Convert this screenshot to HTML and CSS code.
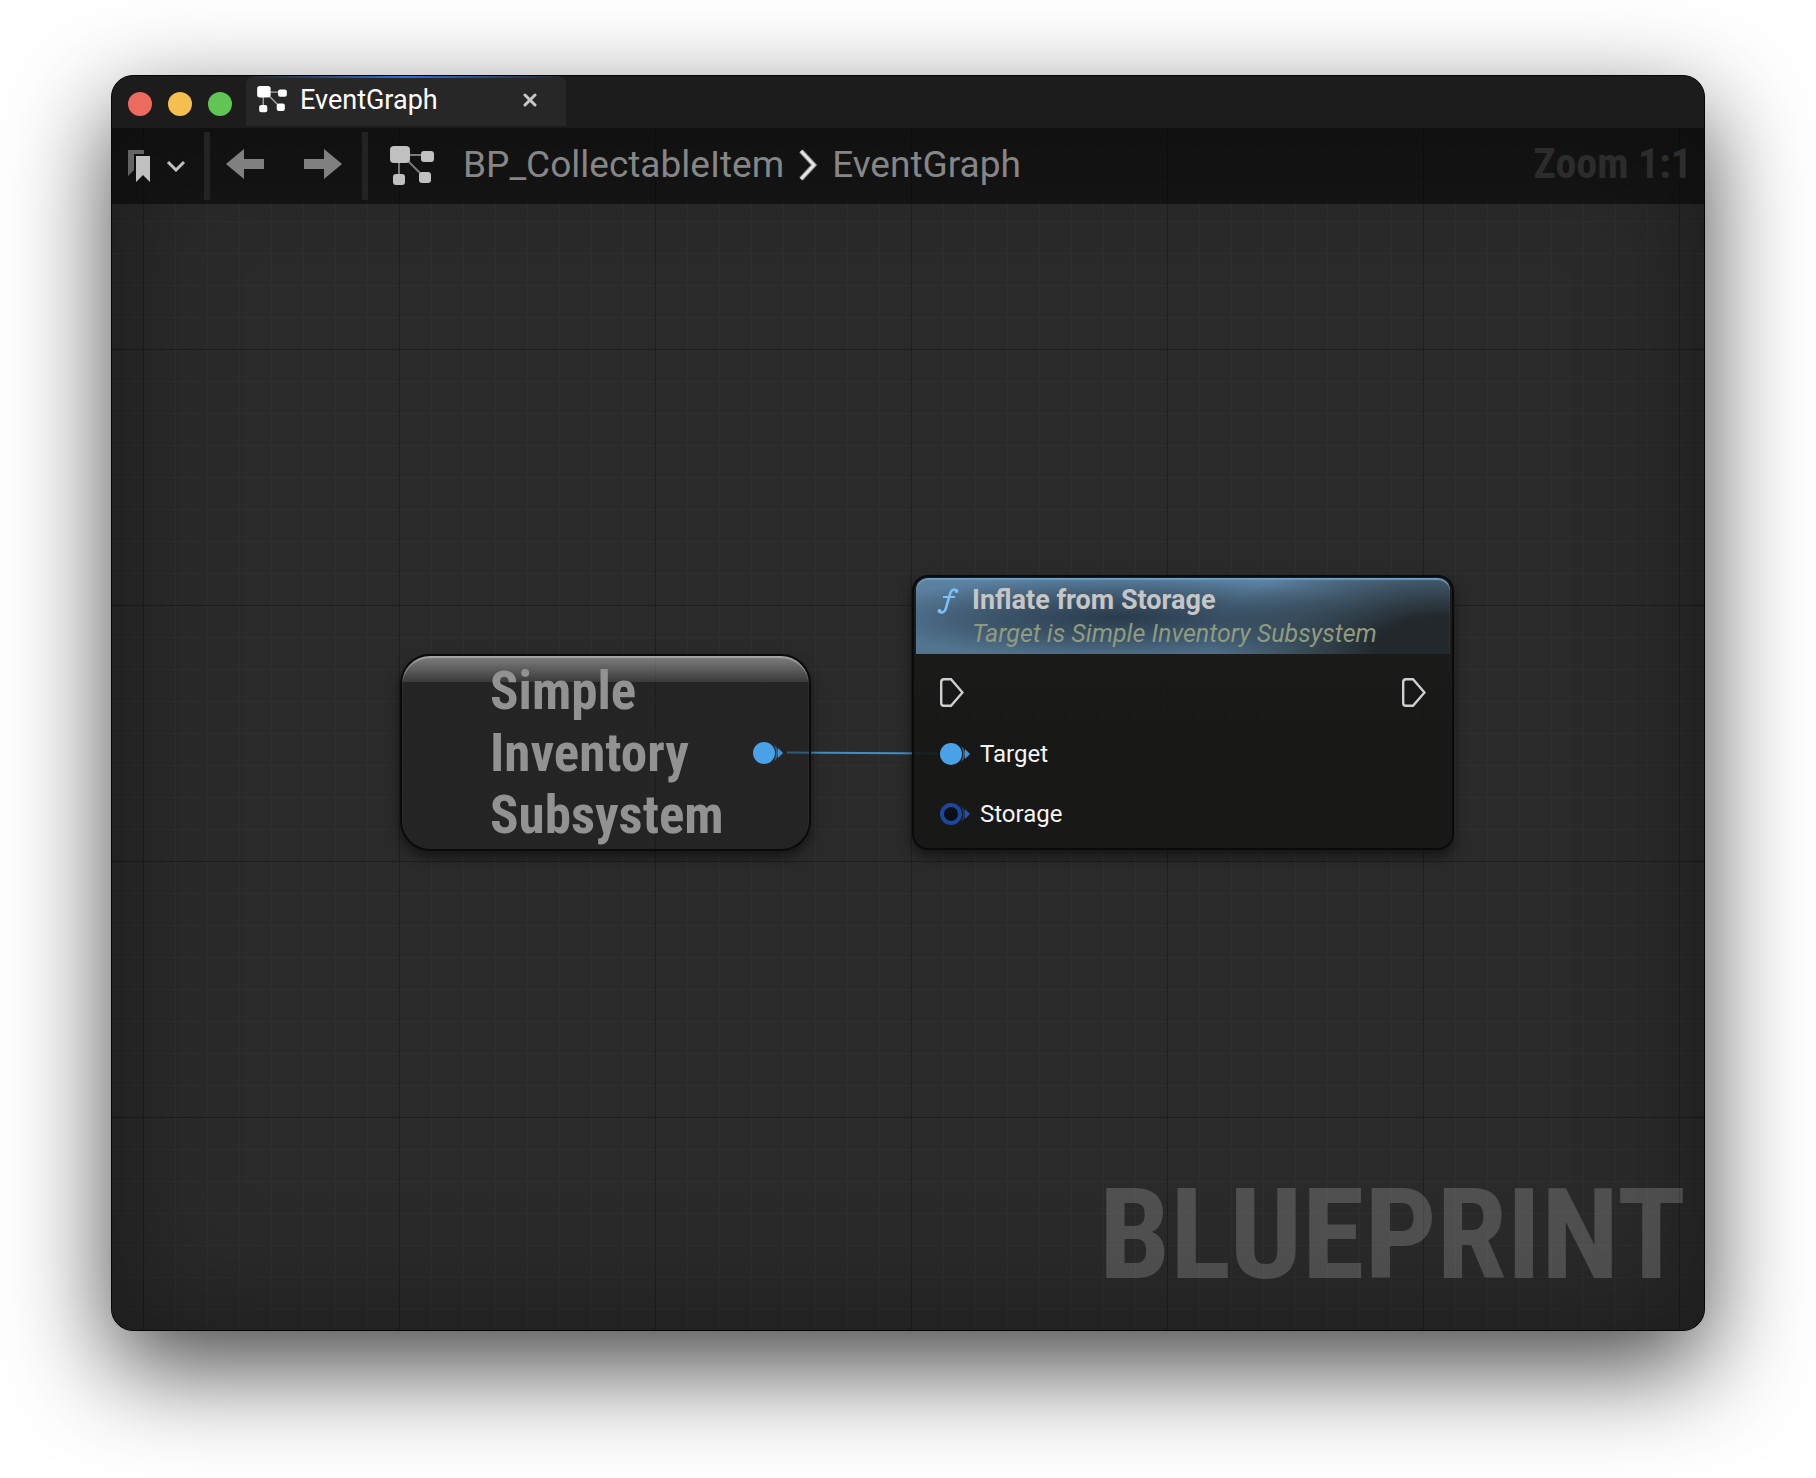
FILE: index.html
```html
<!DOCTYPE html>
<html lang="en">
<head>
<meta charset="utf-8">
<title>EventGraph</title>
<link rel="stylesheet" href="styles.css">
</head>
<body>
<svg class="defs" aria-hidden="true">
  <symbol id="graph" viewBox="0 0 44 40">
    <path d="M17 9H34M9 14V32M17 14L34 31" fill="none" stroke="currentColor" stroke-width="2" opacity=".6"/>
    <rect x="0" y="0" width="20" height="17" rx="4"/>
    <rect x="31" y="5" width="13" height="11" rx="3"/>
    <rect x="3" y="28" width="12" height="11" rx="3"/>
    <rect x="29" y="26" width="12" height="11" rx="3"/>
  </symbol>
  <symbol id="exec" viewBox="0 0 24 29">
    <path d="M1.200 4Q1.200 1.200 4 1.200H11L22.500 14.500L11 27.800H4Q1.200 27.800 1.200 25Z" fill="#161716" stroke="#cfcfcf" stroke-width="2.400"/>
  </symbol>
  <symbol id="pin-tip" viewBox="0 0 30 22">
    <path d="M21 3Q25 11 21 19L24 16Q26 11 24 6Z" opacity=".6"/>
    <path d="M25 6L30 11L25 16Z"/>
  </symbol>
</svg>

<main class="window">
  <header class="titlebar">
    <div class="lights">
      <button class="light light-close" aria-label="Close window"></button>
      <button class="light light-min" aria-label="Minimize window"></button>
      <button class="light light-max" aria-label="Zoom window"></button>
    </div>
    <div class="tab">
      <svg class="tab-icon"><use href="#graph"/></svg>
      <span class="tab-name">EventGraph</span>
      <button class="tab-close" aria-label="Close tab">
        <svg width="14" height="14" viewBox="0 0 14 14"><path d="M2 2L12 12M12 2L2 12" stroke="#c8c8c8" stroke-width="3" stroke-linecap="round"/></svg>
      </button>
    </div>
  </header>

  <section class="graph">
    <nav class="toolbar">
      <button class="bookmarks" aria-label="Bookmarks">
        <svg width="22" height="32" viewBox="0 0 22 32"><path d="M0 0H16V4H6V20L0 26Z" fill="#646464"/><path d="M8 6H22V32L15 25L8 32Z" fill="#c0c0c0"/></svg>
        <svg width="20" height="12" viewBox="0 0 20 12"><path d="M2 2L10 10L18 2" fill="none" stroke="#c0c0c0" stroke-width="3"/></svg>
      </button>
      <span class="divider"></span>
      <div class="history">
        <button aria-label="Back"><svg width="38" height="30" viewBox="0 0 38 30"><path d="M0 15L18 0V10H38V20H18V30Z" fill="#808080"/></svg></button>
        <button aria-label="Forward"><svg width="38" height="30" viewBox="0 0 38 30"><path d="M38 15L20 0V10H0V20H20V30Z" fill="#808080"/></svg></button>
      </div>
      <span class="divider"></span>
      <svg class="crumb-icon"><use href="#graph"/></svg>
      <div class="crumbs">
        <a href="#blueprint">BP_CollectableItem</a>
        <svg width="20" height="32" viewBox="0 0 20 32"><path d="M3 2L16 16L3 30" fill="none" stroke="#777" stroke-width="5"/><path d="M3 2L16 16L3 30" fill="none" stroke="#e4e4e4" stroke-width="3"/></svg>
        <a href="#eventgraph">EventGraph</a>
      </div>
      <span class="zoom">Zoom 1:1</span>
    </nav>

    <svg class="wire" width="150" height="4" viewBox="0 0 150 4"><path d="M0 1.500L150 2.500" stroke="#3d8fcb" stroke-width="2"/></svg>

    <article class="node subsystem">
      <h2 class="subsystem-name">Simple<br>Inventory<br>Subsystem</h2>
      <svg class="pin" viewBox="0 0 30 22"><circle cx="11" cy="11" r="11" fill="#49a1e8"/><use href="#pin-tip" fill="#3f93d6"/></svg>
    </article>

    <article class="node function">
      <header class="function-head">
        <svg width="22" height="26" viewBox="0 0 22 26"><path d="M20 3C17 0 14 2 13 6L9 20C8 24 5 26 2 23" fill="none" stroke="#7cc0f8" stroke-width="2.600"/><path d="M6 9H18" stroke="#7cc0f8" stroke-width="2"/><circle cx="19.500" cy="3" r="2" fill="#7cc0f8"/><circle cx="2.500" cy="23" r="2" fill="#7cc0f8"/></svg>
        <div>
          <h2 class="function-name">Inflate from Storage</h2>
          <p class="function-target">Target is Simple Inventory Subsystem</p>
        </div>
      </header>
      <div class="pins">
        <div class="pin-row pin-row-exec">
          <svg class="exec"><use href="#exec"/></svg>
          <svg class="exec"><use href="#exec"/></svg>
        </div>
        <div class="pin-row">
          <svg class="pin" viewBox="0 0 30 22"><circle cx="11" cy="11" r="11" fill="#49a1e8"/><use href="#pin-tip" fill="#3f93d6"/></svg>
          <span>Target</span>
        </div>
        <div class="pin-row">
          <svg class="pin" viewBox="0 0 30 22"><circle cx="11" cy="11" r="9" fill="#0b0e14" stroke="#1d479c" stroke-width="4"/><use href="#pin-tip" fill="#2450b0"/></svg>
          <span>Storage</span>
        </div>
      </div>
    </article>

    <div class="watermark">BLUEPRINT</div>
  </section>
</main>
</body>
</html>
```
FILE: styles.css
```css
* {
  box-sizing: border-box;
}

body {
  margin: 0;
  min-height: 100vh;
  padding: 75px 111px 147px;
  display: flex;
  background: #fff;
  font-family: Roboto, "Liberation Sans", sans-serif;
}

button {
  border: 0;
  padding: 0;
  background: none;
  display: flex;
  align-items: center;
  cursor: pointer;
}

svg {
  display: block;
  flex: none;
}

h2,
p {
  margin: 0;
}

.defs {
  position: absolute;
  width: 0;
  height: 0;
}

.window {
  flex: 1;
  display: flex;
  flex-direction: column;
  border: 1px solid #050505;
  border-radius: 22px;
  overflow: hidden;
  background: #1c1c1c;
  box-shadow: 0 36px 100px rgba(0, 0, 0, .72);
}

.titlebar {
  display: flex;
  align-items: flex-start;
  gap: 14px;
  height: 52px;
  padding-left: 16px;
}

.lights {
  display: flex;
  gap: 16px;
  padding-top: 16px;
}

.light {
  width: 24px;
  height: 24px;
  border-radius: 50%;
}

.light-close { background: #ec6a5e; }
.light-min { background: #f4bf4f; }
.light-max { background: #61c554; }

.tab {
  display: flex;
  align-items: center;
  width: 320px;
  height: 50px;
  padding: 0 29px 3px 11px;
  border-radius: 8px 8px 0 0;
  background:
    linear-gradient(90deg, #252525, #2e6fd8 50%, #252525) 0 0 / 100% 2px no-repeat,
    #272727;
  color: #fff;
}

.tab-icon {
  width: 30px;
  height: 27px;
  fill: currentColor;
}

.tab-name {
  margin-left: 13px;
  font-size: 27px;
  line-height: 32px;
}

.tab-close {
  margin-left: auto;
}

.graph {
  flex: 1;
  position: relative;
  display: flex;
  flex-direction: column;
  justify-content: space-between;
  box-shadow: inset 0 0 120px rgba(0, 0, 0, .4);
  background:
    linear-gradient(90deg, #1e1e1e 1px, transparent 1px) 31px 0 / 256px 256px,
    linear-gradient(#1e1e1e 1px, transparent 1px) 0 221px / 256px 256px,
    linear-gradient(90deg, #2e2e2e 1px, transparent 1px) 31px 0 / 32px 32px,
    linear-gradient(#2e2e2e 1px, transparent 1px) 0 29px / 32px 32px,
    #2a2a2a;
}

.toolbar {
  display: flex;
  align-items: center;
  height: 76px;
  padding-right: 12px;
  background: rgba(8, 8, 8, .64);
}

.bookmarks {
  gap: 16px;
  width: 92px;
  padding-left: 16px;
}

.divider {
  width: 6px;
  height: 68px;
  background: #232323;
}

.history {
  display: flex;
  gap: 40px;
  padding: 0 20px 4px 16px;
}

.crumb-icon {
  width: 44px;
  height: 40px;
  margin-left: 22px;
  fill: #c0c0c0;
  color: #c0c0c0;
}

.crumbs {
  display: flex;
  align-items: center;
  gap: 14px;
  margin-left: 29px;
  padding-bottom: 2px;
  font-size: 37px;
  line-height: 42px;
}

.crumbs a {
  color: #868686;
  text-decoration: none;
}

.zoom,
.subsystem-name,
.watermark {
  font-family: "Roboto Condensed", "Liberation Sans Narrow", Roboto, sans-serif;
  font-weight: 700;
}

.zoom {
  margin-left: auto;
  padding-bottom: 4px;
  color: #2c2c2c;
  font-size: 42px;
  line-height: 48px;
}

.wire {
  position: absolute;
  left: 675px;
  top: 623px;
}

.node {
  position: absolute;
  border: 2px solid #0a0a0a;
  box-shadow: 0 6px 12px rgba(0, 0, 0, .5);
}

.subsystem {
  left: 288px;
  top: 526px;
  width: 411px;
  display: flex;
  align-items: center;
  justify-content: space-between;
  padding: 4px 26px 3px 88px;
  border-radius: 30px;
  background:
    linear-gradient(rgba(255, 255, 255, .42), rgba(255, 255, 255, .1)) 0 0 / 100% 26px no-repeat,
    rgba(28, 28, 28, .45);
  box-shadow: inset 0 2px 1px rgba(255, 255, 255, .3), 0 6px 12px rgba(0, 0, 0, .5);
}

.subsystem-name {
  color: #929292;
  font-size: 53px;
  line-height: 62px;
}

.pin {
  width: 30px;
  height: 22px;
}

.function {
  left: 800px;
  top: 447px;
  width: 542px;
  padding: 1px 2px 0;
  border-radius: 16px;
  background: linear-gradient(rgba(28, 29, 27, .92), rgba(22, 23, 21, .92) 60%);
}

.function-head {
  display: flex;
  align-items: flex-start;
  gap: 13px;
  height: 76px;
  padding: 6px 20px 0 21px;
  border-radius: 12px 12px 0 0;
  box-shadow: inset 0 2px 1px #6b9cc4;
  background:
    radial-gradient(ellipse 48% 55% at 38% 52%, rgba(34, 48, 62, .85), rgba(34, 48, 62, .5) 50%, transparent),
    radial-gradient(ellipse 45% 130% at 100% 90%, #22282b 30%, transparent),
    linear-gradient(#5c82a2, #52748f);
}

.function-head svg {
  margin-top: 4px;
}

.function-name {
  color: #c6c6c6;
  font-size: 27px;
  line-height: 32px;
}

.function-target {
  color: #8f9b7e;
  font-size: 25px;
  line-height: 36px;
  font-style: italic;
  white-space: nowrap;
}

.pins {
  padding: 8px 24px 4px;
}

.pin-row {
  display: flex;
  align-items: center;
  gap: 10px;
  height: 60px;
  color: #f4f4f4;
  font-size: 24px;
  line-height: 28px;
}

.pin-row-exec {
  justify-content: space-between;
  margin-bottom: 2px;
}

.exec {
  width: 24px;
  height: 29px;
}

.watermark {
  align-self: flex-end;
  padding: 0 18px 20px 0;
  color: rgba(255, 255, 255, .18);
  font-size: 127px;
  line-height: 150px;
}
```
